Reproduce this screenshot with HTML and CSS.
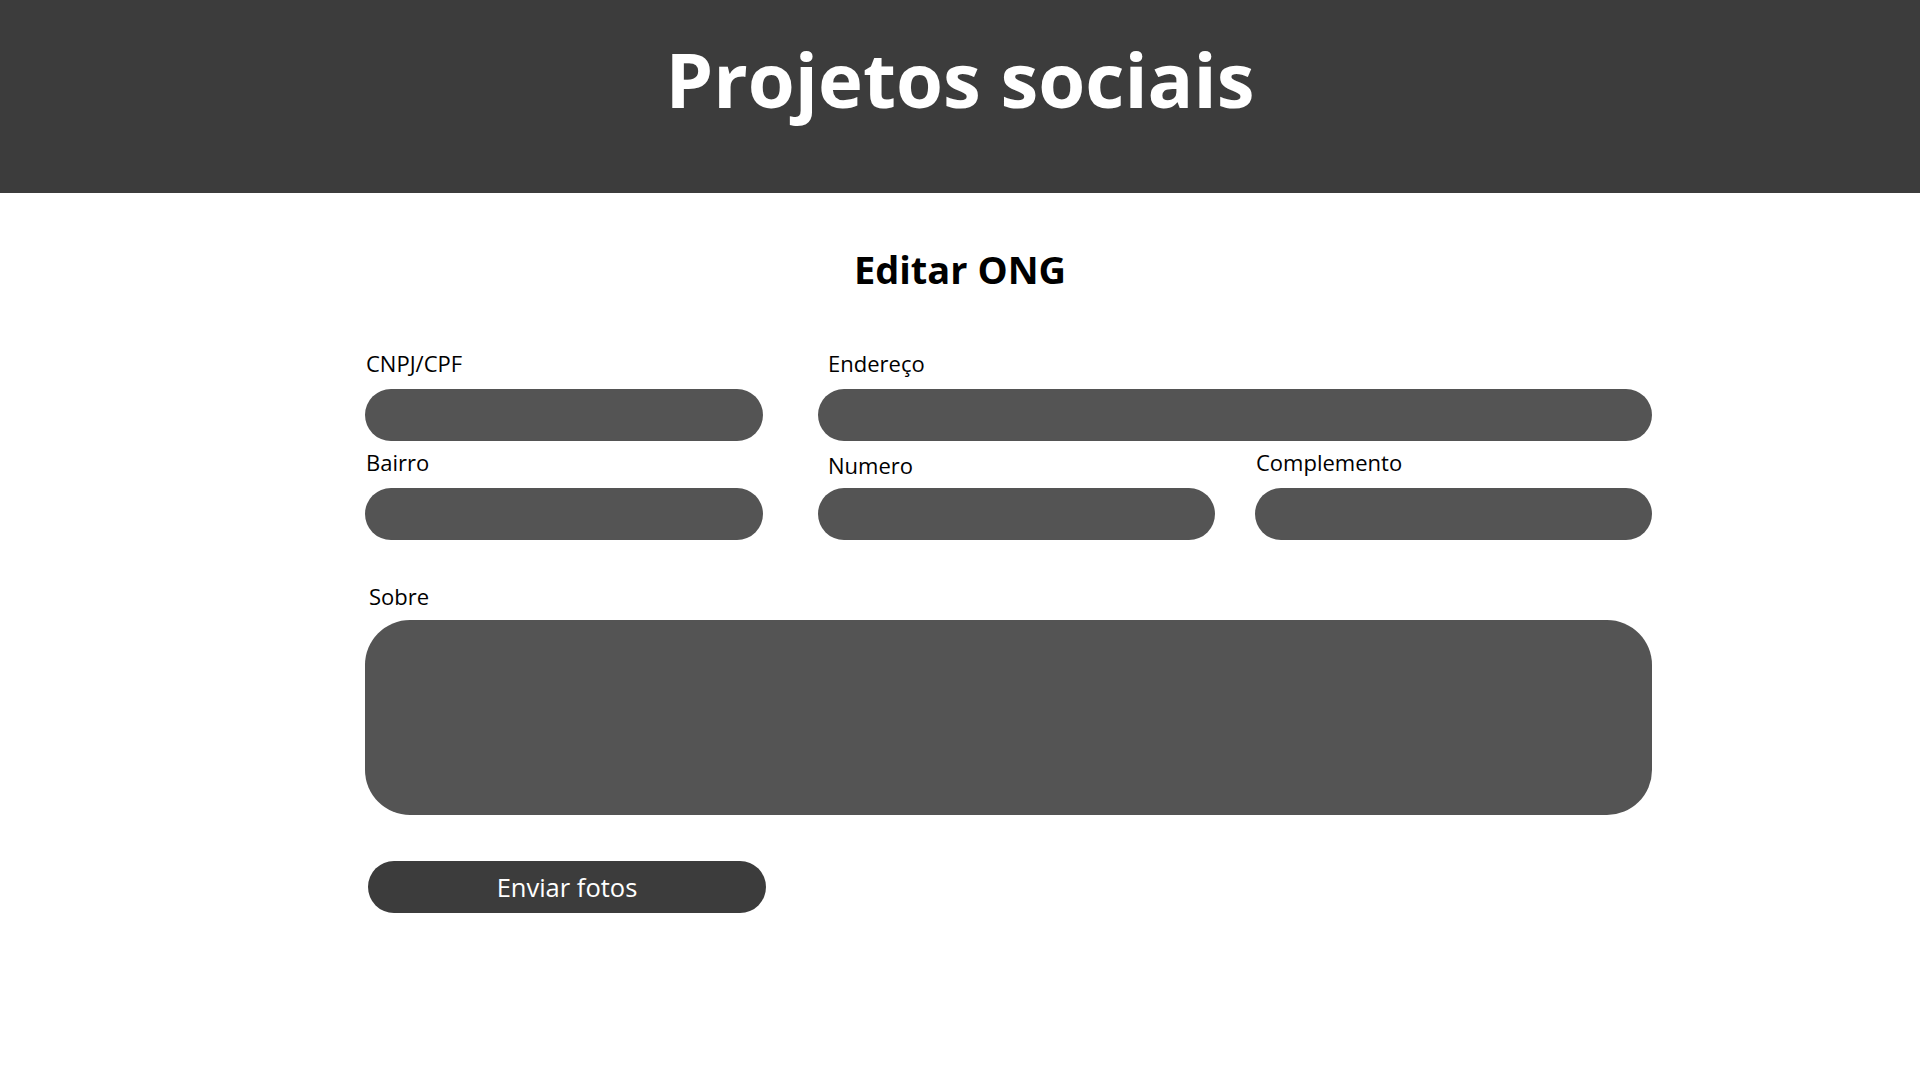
FILE: index.html
```html
<!DOCTYPE html>
<html lang="pt-BR">
<head>
<meta charset="utf-8">
<title>Projetos sociais</title>
<link rel="stylesheet" href="styles.css">
</head>
<body>
<header class="topbar">
  <h1 class="brand">Projetos sociais</h1>
</header>
<main class="page">
  <h2 class="page-title">Editar ONG</h2>
  <form class="form">
    <div class="row">
      <div class="field field-fixed">
        <label class="label">CNPJ/CPF</label>
        <input class="input" type="text">
      </div>
      <div class="field field-grow gap-wide">
        <label class="label label-indent">Endereço</label>
        <input class="input" type="text">
      </div>
    </div>
    <div class="row row-second">
      <div class="field field-fixed">
        <label class="label">Bairro</label>
        <input class="input" type="text">
      </div>
      <div class="field field-mid gap-wide">
        <label class="label label-indent label-low">Numero</label>
        <input class="input" type="text">
      </div>
      <div class="field field-grow gap-narrow">
        <label class="label">Complemento</label>
        <input class="input" type="text">
      </div>
    </div>
    <div class="field about">
      <label class="label label-about">Sobre</label>
      <textarea class="textarea"></textarea>
    </div>
    <button class="upload" type="button">Enviar fotos</button>
  </form>
</main>
</body>
</html>
```

FILE: styles.css
```css
* { box-sizing: border-box; }

body {
  margin: 0;
  font-family: "Open Sans", "Liberation Sans", sans-serif;
  background: #ffffff;
  color: #000000;
}

.topbar {
  height: 193px;
  background: #3c3c3c;
  padding-top: 27px;
}

.brand {
  margin: 0;
  text-align: center;
  color: #ffffff;
  font-size: 76px;
  font-weight: 700;
  line-height: 104px;
}

.page {
  width: 100%;
}

.page-title {
  margin: 50px 0 0 0;
  text-align: center;
  font-size: 38px;
  font-weight: 700;
  line-height: 52px;
}

.form {
  margin-top: 53px;
  margin-left: 365px;
  width: 1287px;
  display: flex;
  flex-direction: column;
}

.row {
  display: flex;
}

.row-second {
  margin-top: 6px;
}

.field {
  display: flex;
  flex-direction: column;
}

.field-fixed { width: 398px; flex: none; }
.field-mid { width: 397px; flex: none; }
.field-grow { flex: 1; }
.gap-wide { margin-left: 55px; }
.gap-narrow { margin-left: 40px; }

.label {
  display: block;
  font-size: 22px;
  line-height: 30px;
  height: 30px;
  margin-bottom: 11px;
  padding-left: 1px;
}

.label-indent { padding-left: 10px; }
.label-low { margin-top: 3px; margin-bottom: 8px; }
.label-about { padding-left: 4px; margin-bottom: 9px; }

.input {
  display: block;
  width: 100%;
  height: 52px;
  border: none;
  border-radius: 26px;
  background: #545454;
  outline: none;
  font: inherit;
}

.about {
  margin-top: 41px;
}

.textarea {
  display: block;
  width: 100%;
  height: 195px;
  border: none;
  border-radius: 45px;
  background: #545454;
  resize: none;
  outline: none;
  font: inherit;
}

.upload {
  align-self: flex-start;
  margin-top: 46px;
  margin-left: 3px;
  width: 398px;
  height: 52px;
  border: none;
  border-radius: 26px;
  background: #3c3c3c;
  color: #ffffff;
  font-family: inherit;
  font-size: 25.5px;
  line-height: 52px;
  padding: 0;
  cursor: pointer;
}
```
